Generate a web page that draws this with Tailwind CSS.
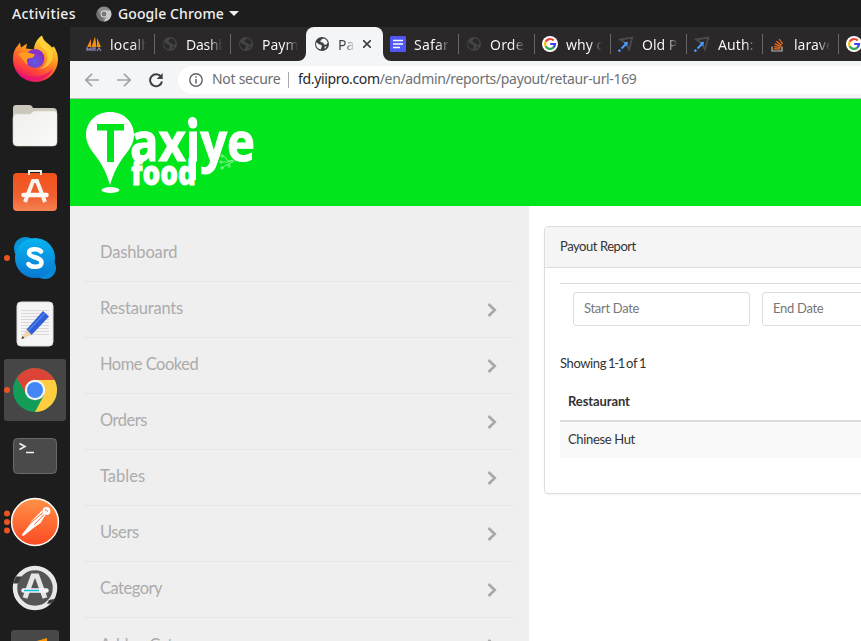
<!DOCTYPE html>
<html lang="en">
<head>
<meta charset="utf-8">
<title>Payout Report</title>
<script src="https://cdn.jsdelivr.net/npm/@tailwindcss/browser@4"></script>
</head>
<body class="w-[861px] h-[641px] overflow-hidden bg-white">
<svg width="0" height="0" class="absolute">
  <defs>
    <linearGradient id="ff" x1=".8" y1="0" x2=".3" y2="1"><stop offset="0" stop-color="#fff04a"/><stop offset=".4" stop-color="#ff9c1c"/><stop offset=".75" stop-color="#ff4438"/><stop offset="1" stop-color="#e80a78"/></linearGradient>
    <radialGradient id="ffp" cx=".5" cy=".7"><stop offset="0" stop-color="#5b5fe0"/><stop offset="1" stop-color="#8a2fc9"/></radialGradient>
    <linearGradient id="sw" x1="0" y1="0" x2="0" y2="1"><stop offset="0" stop-color="#f2511b"/><stop offset=".6" stop-color="#f0602f"/><stop offset="1" stop-color="#f48352"/></linearGradient>
    <linearGradient id="sk" x1="0" y1="0" x2="0" y2="1"><stop offset="0" stop-color="#08b4f0"/><stop offset="1" stop-color="#0a78d4"/></linearGradient>
    <linearGradient id="pm" x1="0" y1="0" x2="0" y2="1"><stop offset="0" stop-color="#ff9247"/><stop offset="1" stop-color="#fc4a24"/></linearGradient>
    <linearGradient id="fo" x1="0" y1="0" x2="1" y2="1"><stop offset="0" stop-color="#f0efeb"/><stop offset="1" stop-color="#fafaf9"/></linearGradient>
    <symbol id="globe" viewBox="0 0 16 16"><circle cx="8" cy="8" r="7" fill="currentColor"/><path d="M2.300 6.300 5 8.300l2.500.8.2 2-1 2.300C3.700 13 2 10.500 2 8zM7.500 3.200 10 2.400c2 .8 3.400 2.500 3.700 4.400l-1.500 1.900-2.200-.3-.9-1.900-2.300-.3-.5-1.700 1.200-.3zM10.500 10.500l2.300.1-2 2.300z" fill="var(--hole)"/></symbol>
    <symbol id="goog" viewBox="0 0 16 16"><circle cx="8" cy="8" r="8" fill="#fff"/><g fill="none" stroke-width="2.200"><path d="M11.700 4.600A5 5 0 0 0 3.600 5.700" stroke="#ea4335"/><path d="M3.600 5.700a5 5 0 0 0 0 4.600" stroke="#fbbc05"/><path d="M3.600 10.300a5 5 0 0 0 7.700 1.400" stroke="#34a853"/><path d="M11.300 11.700A5 5 0 0 0 13 8H8.200" stroke="#4040e8"/></g></symbol>
    <symbol id="arrow" viewBox="0 0 16 16"><path d="M2 3.500 14.300 1.500 11 13.500 8.500 9 6.800 6.500z" fill="none" stroke="#4b4b4d" stroke-width="1.800"/><path d="M3.500 12.500 8.500 7.500" stroke="#4a9cff" stroke-width="2"/><path d="M5.500 6.500l4.500-.8-.8 4.500z" fill="#4a9cff"/><path d="M.5 15.500 2.200 13.800" stroke="#4a9cff" stroke-width="2.500"/></symbol>
    <symbol id="chev" viewBox="0 0 10 16"><path d="M1.500 2 7.700 8 1.500 14" fill="none" stroke="#a9a9ab" stroke-width="2.700"/></symbol>
  </defs>
</svg>

<div class="flex flex-col h-full">
  <!-- desktop bar -->
  <header class="h-[27px] shrink-0 bg-[#1d1d1d] flex items-center text-[#f0f0f0] text-[14px] pl-3 font-['Noto_Sans','Open_Sans',sans-serif] font-medium whitespace-nowrap">
    <span class="w-[64px] tracking-[0.35px]">Activities</span>
    <svg class="ml-[20px] w-4 h-4 shrink-0" viewBox="0 0 16 16"><circle cx="8" cy="8" r="7.500" fill="#8c8c8c"/><path d="M8 4.500h6.500A7.500 7.500 0 0 1 8 15.500l3.200-6z" fill="#c9c9c9"/><path d="M1.500 4.300 5 10l3 1.500-1.500 4A7.500 7.500 0 0 1 1.500 4.300z" fill="#727272"/><circle cx="8" cy="8" r="3.400" fill="#ddd"/><circle cx="8" cy="8" r="2.500" fill="#777"/></svg>
    <span class="ml-[6px] w-[107px] tracking-[0.1px]">Google Chrome</span>
    <svg class="ml-1 w-[10px] h-[5px]" viewBox="0 0 10 5"><path d="M0 0h10L5 5z" fill="#eee"/></svg>
  </header>

  <div class="flex flex-1 min-h-0">
    <!-- dock -->
    <nav class="w-[70px] shrink-0 bg-[#1d1d1d] pt-[2px] flex flex-col items-center gap-1 overflow-hidden">
      <svg class="w-[70px] h-[62px] shrink-0" viewBox="0 0 70 62"><g transform="translate(0 -1.500)"><path d="M13 32c0-7 2-11 4-13l3-4 1 5 6-4-1 5 8 1c0-5 3-11 8-14 2 7 6 7 10 12l2-1c3 5 4 9 4 13a22.500 22.500 0 0 1-45 0z" fill="url(#ff)"/><path d="M15 40c6 10 24 14 38 1-4 9-11 12-18 12-9 0-17-5-20-13z" fill="#e5107a" opacity=".65"/><circle cx="35" cy="31" r="9.500" fill="url(#ffp)"/><path d="M18 27c5-4 11-2 17 0l-2 3-5 1c-2 1-1 4 0 6-4-1-5-7-10-10z" fill="#ff9d22"/><path d="M40 12c-3 6 5 8 7 15 2 8-3 13-9 15 10-1 16-8 15-17-2-5-11-8-13-13z" fill="#ffd83a" opacity=".75"/></g></svg>
      <svg class="w-[70px] h-[62px] shrink-0" viewBox="0 0 70 62"><path d="M13 13q0-3 3-3h13q3 0 4 3h20q4 0 4 4v10H13z" fill="#cbc8bb"/><path d="M13 23q0-4 4-4h13l4-3h20q3 0 3 3v28q0 4-4 4H17q-4 0-4-4z" fill="url(#fo)" stroke="#d7d4ca" stroke-width=".6"/></svg>
      <svg class="w-[70px] h-[62px] shrink-0" viewBox="0 0 70 62"><rect x="13" y="12" width="44" height="38" rx="4" fill="url(#sw)"/><path d="M29 14V10h12v4" fill="none" stroke="#f3eee7" stroke-width="2"/><path d="M25 41 33 20h4l8 21" fill="none" stroke="#f8f3ed" stroke-width="4"/><path d="M23.500 34h23" stroke="#fffaf4" stroke-width="4.500" stroke-linecap="round"/></svg>
      <svg class="w-[70px] h-[62px] shrink-0" viewBox="0 0 70 62"><circle cx="7" cy="31" r="3" fill="#e95420"/><circle cx="25.500" cy="21.500" r="11.500" fill="#0496d9"/><circle cx="45" cy="41" r="11" fill="#078bd7"/><circle cx="35" cy="31" r="20" fill="url(#sk)"/><path d="M41 24.500c-2.500-3-12-3.500-12 1.500 0 5 12.500 3.500 12.500 9.500 0 5.500-10.500 5.500-13 1.500" fill="none" stroke="#fff" stroke-width="4.500" stroke-linecap="round"/></svg>
      <svg class="w-[70px] h-[62px] shrink-0" viewBox="0 0 70 62"><rect x="17" y="9" width="36" height="44" rx="4" fill="#f5f5f5" stroke="#ddd"/><path d="M21 17.500h28M21 20.500h28M21 23.500h28M21 26.500h28M21 29.500h28M21 32.500h28M21 35.500h28M21 38.500h28M21 41.500h28" stroke="#d9d9d9" stroke-width="1"/><path d="M26.500 36.500 43 18l6 5.500L31.500 42z" fill="#2e5fd6"/><path d="m28 38 17-18" stroke="#5383ee" stroke-width="1.500"/><path d="M26.500 36.500 31.500 42 21.500 46z" fill="#f2d3ab"/><path d="m22.500 43 2 2-3 1z" fill="#333"/></svg>
      <div class="w-[70px] h-[62px] shrink-0 relative px-1"><div class="w-[62px] h-[62px] bg-[#464646] rounded-[3px]"></div><svg class="absolute inset-0 w-[70px] h-[62px]" viewBox="0 0 70 62"><circle cx="7" cy="31" r="3" fill="#e95420"/><circle cx="35" cy="31" r="22" fill="#129d58"/><path d="M35 21h19.600A22 22 0 0 1 35 53l9-17z" fill="#ffcd40"/><path d="M16.700 19A22 22 0 0 1 54.600 21H35a10 10 0 0 0-9.500 7L25 33z" fill="#db4437"/><circle cx="35" cy="31" r="10.200" fill="#f4f4f4"/><circle cx="35" cy="31" r="8" fill="#4285f4"/></svg></div>
      <svg class="w-[70px] h-[62px] shrink-0" viewBox="0 0 70 62"><rect x="13.500" y="13.500" width="43" height="35" rx="4" fill="#4a4a4a" stroke="#6a6a6a"/><path d="m19.500 18.500 5.500 3-5.500 3M26 27.500h8" fill="none" stroke="#f3f3f3" stroke-width="1.600"/></svg>
      <svg class="w-[70px] h-[62px] shrink-0" viewBox="0 0 70 62"><g fill="#e95420"><circle cx="7" cy="22.500" r="3"/><circle cx="7" cy="31" r="3"/><circle cx="7" cy="39.500" r="3"/></g><circle cx="35" cy="31" r="23.400" fill="url(#pm)" stroke="#fff" stroke-width="1.500"/><circle cx="46.500" cy="20" r="3.900" fill="#fff"/><path d="m45 18.500 3 2" stroke="#f76b32"/><path d="m42 19.500 3.500 4.500-5 8-7 5-10 8-2-1 8-10 2-4z" fill="#fff"/><path d="m43 21.500-13 11m14-9-9.500 10" stroke="#f76b32" stroke-width="1"/></svg>
      <svg class="w-[70px] h-[62px] shrink-0" viewBox="0 0 70 62"><circle cx="35" cy="31" r="20" fill="#555" stroke="#e8e8e8" stroke-width="4.500"/><path d="M16 19.500h6l-2 3-2 4h-5zM49 43l5-1-1 4-6 1z" fill="#3a3a3a"/><path d="M25 41 33 19h4l8 22" fill="none" stroke="#e6e6e6" stroke-width="5"/><path d="M23.500 33.500h23" stroke="#f4f4f4" stroke-width="4.500" stroke-linecap="round"/><path d="M24 33.500h15" stroke="#19b6ee" stroke-width="1.500"/></svg>
      <svg class="w-[70px] h-[62px] shrink-0" viewBox="0 0 70 62"><rect x="11" y="7" width="48" height="48" rx="3" fill="#484848"/><path d="m30 20 17-5v12H30z" fill="#ff9800"/></svg>
    </nav>

    <main class="flex-1 min-w-0 flex flex-col">
      <!-- tab strip -->
      <div class="h-[34px] shrink-0 bg-[#2b2829] flex pl-2 overflow-hidden text-[14px] text-[#f5f5f5] font-['Noto_Sans','Open_Sans',sans-serif] whitespace-nowrap">
        <div class="w-[76px] shrink-0 flex items-center pl-2"><svg class="w-4 h-4 shrink-0" viewBox="0 0 16 16"><path d="M1 11 5 3v8zM5.500 11 9 .5l1.500 10.500zM11 11V2l4 9z" fill="#f29111"/><path d="M1 15v-3l2 2 2-2v3m2 0v-3h2v3m2 0 2-3 2 3" fill="none" stroke="#8580b4" stroke-width="1.300"/></svg><span class="ml-2 w-[36px] overflow-hidden bg-linear-to-r from-white from-65% to-transparent bg-clip-text text-transparent tracking-[0.2px]">localhost</span></div>
        <div class="w-[76px] shrink-0 flex items-center pl-2 relative before:absolute before:left-0 before:top-[7px] before:h-5 before:w-px before:bg-[#67676a]"><svg class="w-4 h-4 shrink-0 text-[#444345] [--hole:#2b2829]"><use href="#globe"/></svg><span class="ml-2 w-[36px] overflow-hidden bg-linear-to-r from-white from-65% to-transparent bg-clip-text text-transparent tracking-[-0.3px]">Dashboard</span></div>
        <div class="w-[76px] shrink-0 flex items-center pl-2 relative before:absolute before:left-0 before:top-[7px] before:h-5 before:w-px before:bg-[#67676a]"><svg class="w-4 h-4 shrink-0 text-[#444345] [--hole:#2b2829]"><use href="#globe"/></svg><span class="ml-2 w-[36px] overflow-hidden bg-linear-to-r from-white from-65% to-transparent bg-clip-text text-transparent">Payment</span></div>
        <div class="w-[77px] -mr-px shrink-0 flex items-center pl-2 relative bg-[#f4f5f7] rounded-t-lg text-[#3c4043]"><svg class="absolute -left-2 bottom-0 w-2 h-2" viewBox="0 0 8 8"><path d="M8 0v8H0a8 8 0 0 0 8-8z" fill="#f4f5f7"/></svg><svg class="absolute -right-2 bottom-0 w-2 h-2" viewBox="0 0 8 8"><path d="M0 0v8h8a8 8 0 0 1-8-8z" fill="#f4f5f7"/></svg><svg class="w-4 h-4 shrink-0 text-[#3c4043] [--hole:#f4f5f7]"><use href="#globe"/></svg><span class="ml-2 w-[17px] overflow-hidden bg-linear-to-r from-[#3c4043] from-40% to-transparent bg-clip-text text-transparent">Payout</span><svg class="ml-2 w-2 h-2 shrink-0" viewBox="0 0 8 8"><path d="m0 0 8 8M8 0 0 8" stroke="#3c4043" stroke-width="1.600"/></svg></div>
        <div class="w-[76px] shrink-0 flex items-center pl-2"><svg class="w-4 h-4 shrink-0" viewBox="0 0 16 16"><rect width="16" height="16" rx="1.500" fill="#5157f5"/><path d="M3 4.500h10M3 8h10M3 11.500h7" stroke="#fff" stroke-width="1.700"/></svg><span class="ml-2 w-[36px] overflow-hidden bg-linear-to-r from-white from-65% to-transparent bg-clip-text text-transparent tracking-[0.2px]">Safari</span></div>
        <div class="w-[76px] shrink-0 flex items-center pl-2 relative before:absolute before:left-0 before:top-[7px] before:h-5 before:w-px before:bg-[#67676a]"><svg class="w-4 h-4 shrink-0 text-[#444345] [--hole:#2b2829]"><use href="#globe"/></svg><span class="ml-2 w-[35px] overflow-hidden bg-linear-to-r from-white from-65% to-transparent bg-clip-text text-transparent tracking-[0.2px]">Orders</span></div>
        <div class="w-[76px] shrink-0 flex items-center pl-2 relative before:absolute before:left-0 before:top-[7px] before:h-5 before:w-px before:bg-[#67676a]"><svg class="w-4 h-4 shrink-0"><use href="#goog"/></svg><span class="ml-2 w-[36px] overflow-hidden bg-linear-to-r from-white from-65% to-transparent bg-clip-text text-transparent">why c</span></div>
        <div class="w-[76px] shrink-0 flex items-center pl-2 relative before:absolute before:left-0 before:top-[7px] before:h-5 before:w-px before:bg-[#67676a]"><svg class="w-4 h-4 shrink-0"><use href="#arrow"/></svg><span class="ml-2 w-[36px] overflow-hidden bg-linear-to-r from-white from-65% to-transparent bg-clip-text text-transparent">Old P</span></div>
        <div class="w-[76px] shrink-0 flex items-center pl-2 relative before:absolute before:left-0 before:top-[7px] before:h-5 before:w-px before:bg-[#67676a]"><svg class="w-4 h-4 shrink-0"><use href="#arrow"/></svg><span class="ml-2 w-[37px] overflow-hidden bg-linear-to-r from-white from-75% to-transparent bg-clip-text text-transparent tracking-[0.1px]">Auth:</span></div>
        <div class="w-[76px] shrink-0 flex items-center pl-2 relative before:absolute before:left-0 before:top-[7px] before:h-5 before:w-px before:bg-[#67676a]"><svg class="w-4 h-4 shrink-0" viewBox="0 0 16 16"><path d="M2 10.500v4.500h10v-4.500" fill="none" stroke="#bcbbbb" stroke-width="1.200"/><path d="M3.800 12.900h6.500M4 10.600l6.500.9M4.800 7.900l6.100 2.500M6.400 5.200l5.200 4M9.200 3l3.500 5" stroke="#f4701c" stroke-width="1.200"/></svg><span class="ml-2 w-[36px] overflow-hidden bg-linear-to-r from-white from-65% to-transparent bg-clip-text text-transparent">laravel</span></div>
        <div class="w-[76px] shrink-0 flex items-center pl-2 relative before:absolute before:left-0 before:top-[7px] before:h-5 before:w-px before:bg-[#67676a]"><svg class="w-4 h-4 shrink-0"><use href="#goog"/></svg></div>
      </div>

      <!-- toolbar -->
      <div class="h-[38px] shrink-0 bg-[#f4f5f7] border-b border-[#b9bcc0] flex items-center pl-[14px] font-['Noto_Sans','Open_Sans',sans-serif] text-[14px] whitespace-nowrap">
        <svg class="w-4 h-4 shrink-0" viewBox="0 0 16 16"><path d="M15 8H2M8 1.800 1.800 8 8 14.200" fill="none" stroke="#a1a3a5" stroke-width="1.700"/></svg>
        <svg class="ml-4 w-4 h-4 shrink-0" viewBox="0 0 16 16"><path d="M1 8h13M8 1.800 14.200 8 8 14.200" fill="none" stroke="#a1a3a5" stroke-width="1.700"/></svg>
        <svg class="ml-4 w-4 h-4 shrink-0" viewBox="0 0 16 16"><path d="M13 4.700A6 6 0 1 0 14 9.500" fill="none" stroke="#3c4043" stroke-width="2"/><path d="M14.700 1v6h-6z" fill="#3c4043"/></svg>
        <div class="ml-[14px] flex-1 h-7 rounded-l-full bg-white flex items-center pl-[11px]">
          <svg class="w-[14px] h-[14px] shrink-0" viewBox="0 0 14 14"><circle cx="7" cy="7" r="6.200" fill="none" stroke="#5f6368" stroke-width="1.400"/><path d="M7 6v4.500M7 3.300v1.500" stroke="#5f6368" stroke-width="1.500"/></svg>
          <span class="ml-[9px] w-[69px] pb-0.5 text-[#6a6d71] tracking-[-0.28px]">Not secure</span>
          <span class="ml-[7px] w-px h-4 bg-[#a6a8aa]"></span>
          <span class="ml-[9px] pb-0.5 text-[#6e7074] tracking-[-0.34px]"><span class="text-[#26282b]">fd.yiipro.com</span>/en/admin/reports/payout/retaur-url-169</span>
        </div>
      </div>

      <!-- brand header -->
      <div class="h-[107px] shrink-0 bg-[#00e51b] pl-[15px] pt-[10px]">
        <svg class="w-[180px] h-[90px]" viewBox="85 109 180 90" fill="#fff" font-family="Open Sans, sans-serif">
          <path d="M110 112c14 0 24 10 24 23 0 12-9 18-15 29-5 8-7 15-9 21-2-6-4-13-9-21-6-11-15-17-15-29 0-13 10-23 24-23z"/>
          <ellipse cx="110.500" cy="190" rx="9" ry="3"/>
          <path d="M97 124h27v6.500h-10V162h-7v-31.500H97z" fill="#00e51b"/>
          <text x="130" y="161" font-size="53" font-weight="700" stroke="#fff" stroke-width="1" textLength="125" lengthAdjust="spacingAndGlyphs">axiye</text>
          <ellipse cx="192.500" cy="122" rx="4.600" ry="5"/>
          <path d="M189 150h7v30h-7z"/>
          <text x="131" y="185" font-size="33" font-weight="800" stroke="#fff" stroke-width=".8" textLength="65" lengthAdjust="spacingAndGlyphs">food</text>
          <path d="m222 155 4 3 2 3h7m-13 1h6l5-2m-11 8 4-3 7-3" fill="none" stroke="#a0f5a8" stroke-width=".8"/><g fill="none" stroke="#a0f5a8" stroke-width=".8"><circle cx="222" cy="156" r="1.200"/><circle cx="221" cy="162" r="1.200"/><circle cx="222" cy="168" r="1.200"/><circle cx="229" cy="166" r="1.200"/></g>
        </svg>
      </div>

      <div class="flex-1 min-h-0 flex font-[Lato,'Open_Sans',sans-serif] whitespace-nowrap">
        <!-- sidebar -->
        <aside class="w-[459px] shrink-0 bg-[#efefef] px-[15px] pt-5 overflow-hidden text-[16.5px] text-[#ababab]">
          <div class="h-14 border-b border-[#e6e6e6] pl-[15px] pb-0.5 flex items-center"><span class="tracking-[-0.15px]">Dashboard</span></div>
          <div class="h-14 border-b border-[#e6e6e6] pl-[15px] pr-[17px] flex items-center justify-between"><span class="pb-0.5 tracking-[-0.2px]">Restaurants</span><svg class="w-[10px] h-4"><use href="#chev"/></svg></div>
          <div class="h-14 border-b border-[#e6e6e6] pl-[15px] pr-[17px] flex items-center justify-between"><span class="pb-0.5 tracking-[-0.5px]">Home Cooked</span><svg class="w-[10px] h-4"><use href="#chev"/></svg></div>
          <div class="h-14 border-b border-[#e6e6e6] pl-[15px] pr-[17px] flex items-center justify-between"><span class="pb-0.5 tracking-[-0.5px]">Orders</span><svg class="w-[10px] h-4"><use href="#chev"/></svg></div>
          <div class="h-14 border-b border-[#e6e6e6] pl-[15px] pr-[17px] flex items-center justify-between"><span class="pb-0.5">Tables</span><svg class="w-[10px] h-4"><use href="#chev"/></svg></div>
          <div class="h-14 border-b border-[#e6e6e6] pl-[15px] pr-[17px] flex items-center justify-between"><span class="pb-0.5 tracking-[-0.4px]">Users</span><svg class="w-[10px] h-4"><use href="#chev"/></svg></div>
          <div class="h-14 border-b border-[#e6e6e6] pl-[15px] pr-[17px] flex items-center justify-between"><span class="pb-0.5 tracking-[-0.5px]">Category</span><svg class="w-[10px] h-4"><use href="#chev"/></svg></div>
          <div class="h-14 border-b border-[#e6e6e6] pl-[15px] pr-[17px] flex items-center justify-between"><span class="tracking-[-0.5px]">Addon Category</span><svg class="w-[10px] h-4"><use href="#chev"/></svg></div>
        </aside>

        <!-- report -->
        <section class="flex-1 min-w-0 overflow-hidden pl-[15px] pt-5 text-[13px] text-[#333]">
          <div class="w-[600px] h-[268px] rounded border border-[#ddd] shadow-xs overflow-hidden">
            <div class="h-[41px] bg-[#f5f5f5] border-b border-[#ddd] pl-[15px] flex items-center tracking-[-0.45px]">Payout Report</div>
            <div class="px-[15px] pt-[15px]">
              <div class="border-t border-[#ddd] pt-2 pl-[13px] flex gap-3 text-[#777] tracking-[-0.3px]">
                <div class="w-[177px] h-[34px] rounded-[3px] border border-[#ddd] pl-[10px] flex items-center">Start Date</div>
                <div class="w-[177px] h-[34px] rounded-[3px] border border-[#ddd] pl-[10px] flex items-center">End Date</div>
              </div>
              <div class="mt-[27px] h-5 leading-5 tracking-[-0.4px]">Showing<span class="tracking-[-1.3px]"> 1-1 </span>of<span class="tracking-[-1.3px]"> 1</span></div>
              <div class="mt-[10px] h-[39px] border-b-2 border-[#ddd] pl-2 flex items-center font-bold tracking-[-0.1px]">Restaurant</div>
              <div class="h-9 bg-[#f9f9f9] pl-2 flex items-center tracking-[-0.35px]">Chinese Hut</div>
            </div>
          </div>
        </section>
      </div>
    </main>
  </div>
</div>
</body>
</html>
